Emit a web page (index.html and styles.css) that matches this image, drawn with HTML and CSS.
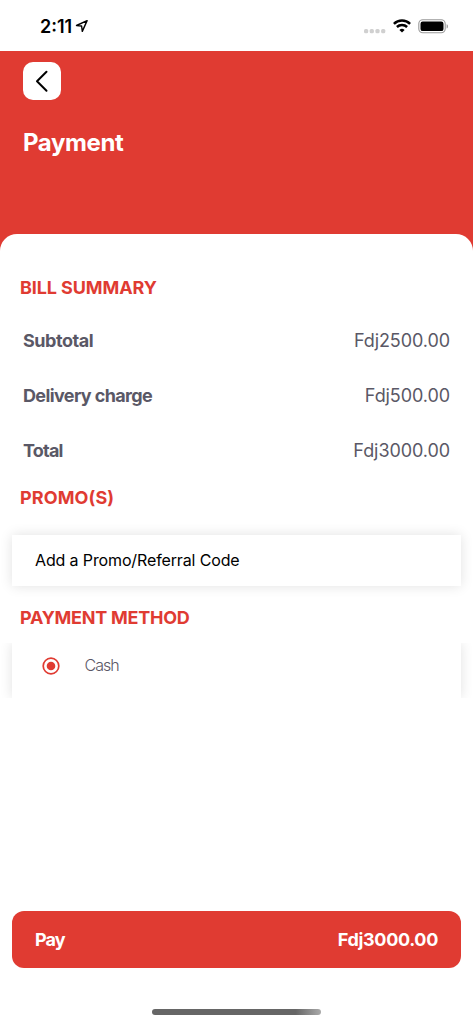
FILE: index.html
```html
<!DOCTYPE html>
<html lang="en">
<head>
<meta charset="utf-8">
<title>Payment</title>
<link rel="stylesheet" href="styles.css">
</head>
<body>
<div class="screen">
  <div class="status">
    <div class="status-left">
      <span class="time">2:11</span>
      <svg class="location" width="14" height="14" viewBox="0 0 14 14"><path d="M12.1 1.6 1.5 6.5l5.1.5.7 5.4z" fill="none" stroke="#000" stroke-width="1.4" stroke-linejoin="round"/></svg>
    </div>
    <div class="status-right">
      <svg width="22" height="5" viewBox="0 0 22 5" class="signal" fill="#d0d0d0"><rect x="0" width="4.2" height="4.2" rx="1.5"/><rect x="5.7" width="4.2" height="4.2" rx="1.5"/><rect x="11.4" width="4.2" height="4.2" rx="1.5"/><rect x="17.1" width="4.2" height="4.2" rx="1.5"/></svg>
      <svg width="18" height="14" viewBox="0 0 18 14" class="wifi"><g fill="none" stroke="#000" stroke-width="2.5"><path d="M.9 4.9a11.6 11.6 0 0 1 16.2 0"/><path d="M3.9 8a7.3 7.3 0 0 1 10.2 0"/></g><path d="M9 13.5 6.4 10.9a3.8 3.8 0 0 1 5.2 0z"/></svg>
      <svg width="31" height="15" viewBox="0 0 31 15" class="battery"><rect x=".8" y=".8" width="26.4" height="13" rx="4" fill="none" stroke="#999" stroke-width="1.1"/><rect x="2.5" y="2.5" width="23" height="9.6" rx="2.2"/><path d="M28.7 5.2c1.5.5 1.5 3.7 0 4.2z" fill="#888"/></svg>
    </div>
  </div>
  <header class="header">
    <button class="back" aria-label="Back"><svg width="38" height="38" viewBox="0 0 38 38"><path d="M23.5 9.7 14 19.2l9.5 9.5" fill="none" stroke="#000" stroke-width="2" stroke-linecap="round" stroke-linejoin="round"/></svg></button>
    <h1 class="title">Payment</h1>
  </header>
  <main class="sheet">
    <h2 class="heading bill">BILL SUMMARY</h2>
    <div class="row"><span class="label subtotal">Subtotal</span><span class="amount">Fdj2500.00</span></div>
    <div class="row"><span class="label delivery">Delivery charge</span><span class="amount">Fdj500.00</span></div>
    <div class="row"><span class="label total">Total</span><span class="amount">Fdj3000.00</span></div>
    <h2 class="heading promos">PROMO(S)</h2>
    <div class="promo-box"><span class="promo-text">Add a Promo/Referral Code</span></div>
    <h2 class="heading method">PAYMENT METHOD</h2>
    <div class="method-clip"><div class="method-box">
      <svg width="18" height="18" viewBox="0 0 18 18"><circle cx="9" cy="9" r="7.8" fill="none" stroke="#e03b32" stroke-width="1.7"/><circle cx="9" cy="9" r="4.3" fill="#e03b32"/></svg>
      <span class="cash">Cash</span>
    </div></div>
  </main>
  <div class="pay"><span class="pay-label">Pay</span><span class="pay-total">Fdj3000.00</span></div>
  <div class="home"></div>
</div>
</body>
</html>
```
FILE: styles.css
```css
* { box-sizing: border-box; }
body { margin: 0; background: #fff; font-family: Inter, "Liberation Sans", sans-serif; }
.screen { width: 473px; height: 1024px; display: flex; flex-direction: column; overflow: hidden; background: #fff; }
.status { height: 50.5px; flex: none; display: flex; justify-content: space-between; padding: 0 24px 0 40px; }
.status-left { display: flex; gap: 3px; }
.time { font-size: 18px; font-weight: 600; line-height: 54px; letter-spacing: 0; }
.location { margin-top: 19px; }
.status-right { display: flex; }
.signal { margin: 28.5px 7px 0 0; }
.wifi { margin: 19px 7px 0 0; }
.battery { margin-top: 18.7px; }
.header { height: 200px; flex: none; background: #e03b32; padding: 11px 23px 0; }
.back { display: block; width: 38px; height: 38px; padding: 0; border: 0; border-radius: 10px; background: #fff; }
.back svg { display: block; }
.title { margin: 27px 0 0; font-size: 24px; line-height: 32px; font-weight: 700; letter-spacing: -0.4px; color: #fff; }
.sheet { margin-top: -17px; background: #fff; border-radius: 17px 17px 0 0; padding-top: 42.5px; flex: 1; }
.heading { margin: 0 0 0 20px; font-size: 18px; line-height: 24px; font-weight: 650; color: #e03b32; white-space: nowrap; letter-spacing: -0.1px; }
.bill { margin-bottom: 13px; }
.row { height: 55px; display: flex; align-items: center; justify-content: space-between; padding: 0 23px; color: #5a5866; font-size: 18px; }
.label { font-weight: 650; letter-spacing: -0.63px; }
.label.subtotal { letter-spacing: -0.45px; }
.label.total { letter-spacing: -0.8px; }
.amount { font-weight: 430; letter-spacing: -0.07px; margin-right: -0.1px; }
.promos { margin-top: 8px; letter-spacing: 0.1px; }
.promo-box { height: 51.5px; margin: 24.5px 12px 0; background: #fff; box-shadow: 0 0 12px rgba(0,0,0,.12); display: flex; align-items: center; padding-left: 23px; font-size: 16px; color: #000; }
.promo-text { letter-spacing: -0.13px; }
.method { margin-top: 20px; letter-spacing: -0.25px; }
.method-clip { overflow: hidden; margin-top: 13px; height: 55px; }
.method-box { height: 55px; margin: 0 12px; box-shadow: 0 0 12px rgba(0,0,0,.12); display: flex; align-items: flex-start; padding: 12.3px 0 0 30px; gap: 24.5px; }
.method-box svg { flex: none; margin-top: 1.4px; }
.cash { font-size: 16px; line-height: 20px; font-weight: 300; color: #5a5866; letter-spacing: -1px; }
.pay { flex: none; height: 57px; margin: 0 12px; border-radius: 12px; background: #e03b32; color: #fff; font-size: 18px; font-weight: 650; display: flex; align-items: center; justify-content: space-between; padding: 0 23px; letter-spacing: -0.33px; }
.pay-label { letter-spacing: -0.9px; }
.home { flex: none; width: 169px; height: 6px; margin: 41px auto 9.3px 152px; border-radius: 3px; background: linear-gradient(90deg, #666 0, #666 85%, #aaa 100%); }
```
